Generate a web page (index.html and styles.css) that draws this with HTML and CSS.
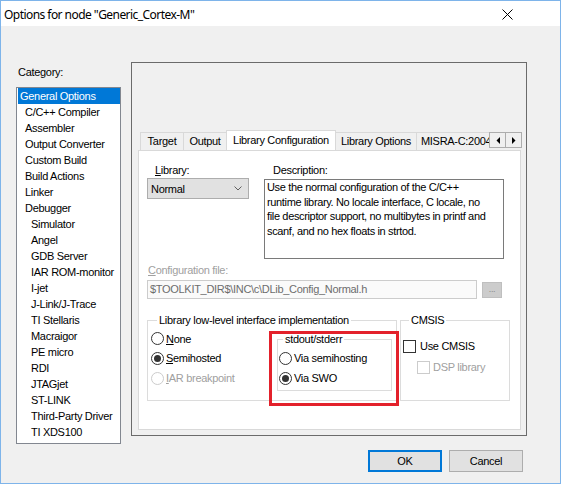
FILE: index.html
```html
<!DOCTYPE html>
<html>
<head>
<meta charset="utf-8">
<link rel="stylesheet" href="styles.css">
</head>
<body>
<div class="window">
  <div class="titlebar">
    <span class="title">Options for node "Generic_Cortex-M"</span>
    <svg class="close" viewBox="0 0 11 11" width="11" height="11"><path d="M0.5 0.5 L10.5 10.5 M10.5 0.5 L0.5 10.5" stroke="#000" stroke-width="1" fill="none"/></svg>
  </div>
  <div class="main">
    <div class="category">
      <div class="cat-label">Category:</div>
      <ul class="cat-list">
        <li class="cat-item root selected">General Options</li>
        <li class="cat-item">C/C++ Compiler</li>
        <li class="cat-item">Assembler</li>
        <li class="cat-item">Output Converter</li>
        <li class="cat-item">Custom Build</li>
        <li class="cat-item">Build Actions</li>
        <li class="cat-item">Linker</li>
        <li class="cat-item">Debugger</li>
        <li class="cat-item sub">Simulator</li>
        <li class="cat-item sub">Angel</li>
        <li class="cat-item sub">GDB Server</li>
        <li class="cat-item sub">IAR ROM-monitor</li>
        <li class="cat-item sub">I-jet</li>
        <li class="cat-item sub">J-Link/J-Trace</li>
        <li class="cat-item sub">TI Stellaris</li>
        <li class="cat-item sub">Macraigor</li>
        <li class="cat-item sub">PE micro</li>
        <li class="cat-item sub">RDI</li>
        <li class="cat-item sub">JTAGjet</li>
        <li class="cat-item sub">ST-LINK</li>
        <li class="cat-item sub">Third-Party Driver</li>
        <li class="cat-item sub">TI XDS100</li>
      </ul>
    </div>
    <div class="frame">
      <div class="tabstrip">
        <div class="tab-list">
          <div class="tab tab-target">Target</div>
          <div class="tab tab-output">Output</div>
          <div class="tab tab-libconf active">Library Configuration</div>
          <div class="tab tab-libopt">Library Options</div>
          <div class="tab tab-misra">MISRA-C:2004</div>
        </div>
        <div class="tab-arrows">
          <div class="arrow-btn"><svg width="4" height="7" viewBox="0 0 4 7"><path d="M4 0 L4 7 L0.5 3.5 Z" fill="#000"/></svg></div>
          <div class="arrow-btn"><svg width="4" height="7" viewBox="0 0 4 7"><path d="M0 0 L0 7 L3.5 3.5 Z" fill="#000"/></svg></div>
        </div>
      </div>
      <div class="panel">
        <div class="row-lib">
          <div class="lib-col">
            <div class="label lib-label"><u>L</u>ibrary:</div>
            <div class="dropdown">
              <span>Normal</span>
              <svg width="8" height="5" viewBox="0 0 8 5"><path d="M0.5 0.5 L4 4 L7.5 0.5" stroke="#606060" stroke-width="1" fill="none"/></svg>
            </div>
          </div>
          <div class="desc-col">
            <div class="label desc-label">Description:</div>
            <div class="desc-box">Use the normal configuration of the C/C++<br>runtime library. No locale interface, C locale, no<br>file descriptor support, no multibytes in printf and<br>scanf, and no hex floats in strtod.</div>
          </div>
        </div>
        <div class="label cfg-label disabled"><u>C</u>onfiguration file:</div>
        <div class="cfg-row">
          <div class="cfg-input">$TOOLKIT_DIR$\INC\c\DLib_Config_Normal.h</div>
          <div class="cfg-btn">...</div>
        </div>
        <div class="groups">
          <fieldset class="group group-lowlevel">
            <legend>Library low-level interface implementation</legend>
            <div class="lowlevel-body">
              <div class="radio-col">
                <div class="opt row-first"><span class="radio"></span><span class="opt-text"><u>N</u>one</span></div>
                <div class="opt"><span class="radio checked"></span><span class="opt-text"><u>S</u>emihosted</span></div>
                <div class="opt disabled"><span class="radio"></span><span class="opt-text"><u>I</u>AR breakpoint</span></div>
              </div>
              <fieldset class="group group-stdout">
                <legend>stdout/stderr</legend>
                <div class="opt"><span class="radio"></span><span class="opt-text">Via semihosting</span></div>
                <div class="opt"><span class="radio checked"></span><span class="opt-text">Via SWO</span></div>
              </fieldset>
            </div>
          </fieldset>
          <fieldset class="group group-cmsis">
            <legend>CMSIS</legend>
            <div class="chk-row"><span class="check"></span><span class="chk-text">Use CMSIS</span></div>
            <div class="chk-row chk-sub disabled"><span class="check"></span><span class="chk-text">DSP library</span></div>
          </fieldset>
        </div>
        <div class="highlight"></div>
      </div>
    </div>
  </div>
  <div class="buttons">
    <div class="btn btn-default">OK</div>
    <div class="btn">Cancel</div>
  </div>
</div>
</body>
</html>
```
FILE: styles.css
```css
* { box-sizing: border-box; }
html, body { margin: 0; padding: 0; }
body {
  width: 561px; height: 484px; overflow: hidden; background: #fff;
  font-family: "Liberation Sans", Arial, sans-serif; font-size: 11px; color: #000;
  letter-spacing: -0.3px;
}
.window {
  width: 561px; height: 484px; border: 1px solid #7eb4ea;
  background: #f0f0f0; display: flex; flex-direction: column;
}
.titlebar {
  flex: none; height: 25px; background: #fff;
  display: flex; align-items: center; justify-content: space-between;
  padding-left: 3px;
}
.title { font-family: "Noto Sans", sans-serif; font-size: 12px; letter-spacing: -0.55px; margin-top: 1px; }
.close { margin-right: 47px; margin-top: 2px; }

.main { display: flex; padding: 36px 0 0 15px; }
.category { width: 105px; flex: none; }
.cat-label { margin: 4px 0 0 2px; height: 13px; line-height: 13px; }
.cat-list {
  margin: 8px 0 0; padding: 0 0 0 1px; list-style: none;
  height: 357px; border: 1px solid #828790; background: #fff;
}
.cat-item { height: 16px; line-height: 16px; padding-left: 7px; white-space: nowrap; }
.cat-item.root { padding-left: 2px; }
.cat-item.sub { padding-left: 13px; }
.cat-item.selected { background: #0078d7; color: #fff; }

.frame {
  margin-left: 10px; width: 396px; height: 374px;
  border: 1px solid #6b6b6b; padding: 67px 5px 5px 6px;
}
.tabstrip { display: flex; height: 20px; }
.tab-list { display: flex; align-items: flex-end; width: 349px; margin-left: 2px; overflow: hidden; flex: none; }
.tab {
  flex: none; height: 18px; line-height: 16px; text-align: center;
  border: 1px solid #d9d9d9; border-bottom: none; background: #f0f0f0;
  margin-left: -1px; white-space: nowrap;
}
.tab:first-child { margin-left: 0; }
.tab-target { width: 44px; }
.tab-output { width: 44px; }
.tab-libconf { width: 110px; }
.tab-libopt { width: 82px; }
.tab-misra { width: 80px; text-align: left; padding-left: 4px; }
.tab.active {
  height: 21px; line-height: 18px; background: #fff; margin-bottom: -1px;
  position: relative; z-index: 1;
}
.tab-arrows { display: flex; padding-top: 2px; }
.arrow-btn {
  width: 17px; height: 16px; border: 1px solid #adadad; background: #f0f0f0;
  display: flex; align-items: center; justify-content: center; margin-left: -1px;
}
.arrow-btn:first-child { margin-left: 0; }

.panel {
  position: relative; width: 383px; height: 280px;
  border: 1px solid #d9d9d9; background: #fff; padding: 13px 0 0 8px;
}
.label { height: 13px; line-height: 13px; white-space: nowrap; }
.disabled { color: #a0a0a0; }
.row-lib { display: grid; grid-template-columns: 117px 1fr; }
.lib-label { margin-left: 8px; }
.dropdown {
  margin-top: 1px; width: 102px; height: 21px;
  background: #e1e1e1; border: 1px solid #adadad;
  display: flex; align-items: center; justify-content: space-between;
  padding: 0 6px 0 3px;
}
.desc-label { margin-left: 9px; }
.desc-box {
  margin-top: 2px; width: 240px; height: 80px; border: 1px solid #7a7a7a;
  padding: 0 0 0 2px; line-height: 14.7px; white-space: nowrap; overflow: hidden;
  letter-spacing: -0.35px;
}
.cfg-label { margin: 5px 0 0 1px; }
.cfg-row { display: flex; align-items: center; margin-top: 3px; }
.cfg-input {
  width: 330px; height: 19px; border: 1px solid #cccccc; background: #fafafa;
  color: #6d6d6d; line-height: 17px; padding-left: 2px; white-space: nowrap;
}
.cfg-btn {
  margin-left: 5px; width: 20px; height: 16px; background: #cccccc;
  border: 1px solid #bfbfbf; color: #8a8a8a; font-size: 9px; line-height: 12px; text-align: center;
}

.groups { display: flex; gap: 3px; margin-top: 15px; }
.group { margin: 0; border: 1px solid #dcdcdc; min-width: 0; }
.group legend { padding: 0 2px; line-height: 13px; height: 13px; white-space: nowrap; }
.group-lowlevel { width: 250px; height: 87px; padding: 2px 0 0 3px; }
.group-lowlevel > legend { margin-left: 6px; }
.lowlevel-body { display: flex; }
.radio-col { width: 126px; flex: none; }
.opt { display: flex; align-items: center; height: 20px; white-space: nowrap; }
.opt.row-first { height: 19px; }
.radio {
  width: 13px; height: 13px; border-radius: 50%; border: 1px solid #333;
  background: #fff; flex: none; display: flex; align-items: center; justify-content: center;
}
.radio.checked::after { content: ""; width: 7px; height: 7px; border-radius: 50%; background: #333; }
.disabled .radio { border-color: #cccccc; }
.opt-text { margin-left: 2px; }
.group-stdout { width: 115px; height: 58px; margin-top: 4px; padding: 2px 0 0 1px; }
.group-stdout > legend { margin-left: 4px; }

.group-cmsis { width: 110px; height: 87px; padding: 10px 0 0 2px; }
.group-cmsis > legend { margin-left: 6px; }
.chk-row { display: flex; align-items: center; height: 18px; white-space: nowrap; }
.chk-sub { margin: 3px 0 0 14px; }
.check { width: 13px; height: 13px; border: 1px solid #333; background: #fff; flex: none; }
.disabled .check { border-color: #cccccc; }
.chk-text { margin-left: 4px; }
.chk-sub .chk-text { margin-left: 3px; }

.highlight {
  position: absolute; left: 130px; top: 180px; width: 130px; height: 75px;
  border: 3px solid #e3212b; pointer-events: none;
}

.buttons { display: flex; justify-content: flex-end; gap: 7px; margin-top: 6px; padding-right: 37px; }
.btn {
  width: 74px; height: 22px; background: #e1e1e1; border: 1px solid #adadad;
  display: flex; align-items: center; justify-content: center;
}
.btn-default { border: 2px solid #0078d7; }
```
